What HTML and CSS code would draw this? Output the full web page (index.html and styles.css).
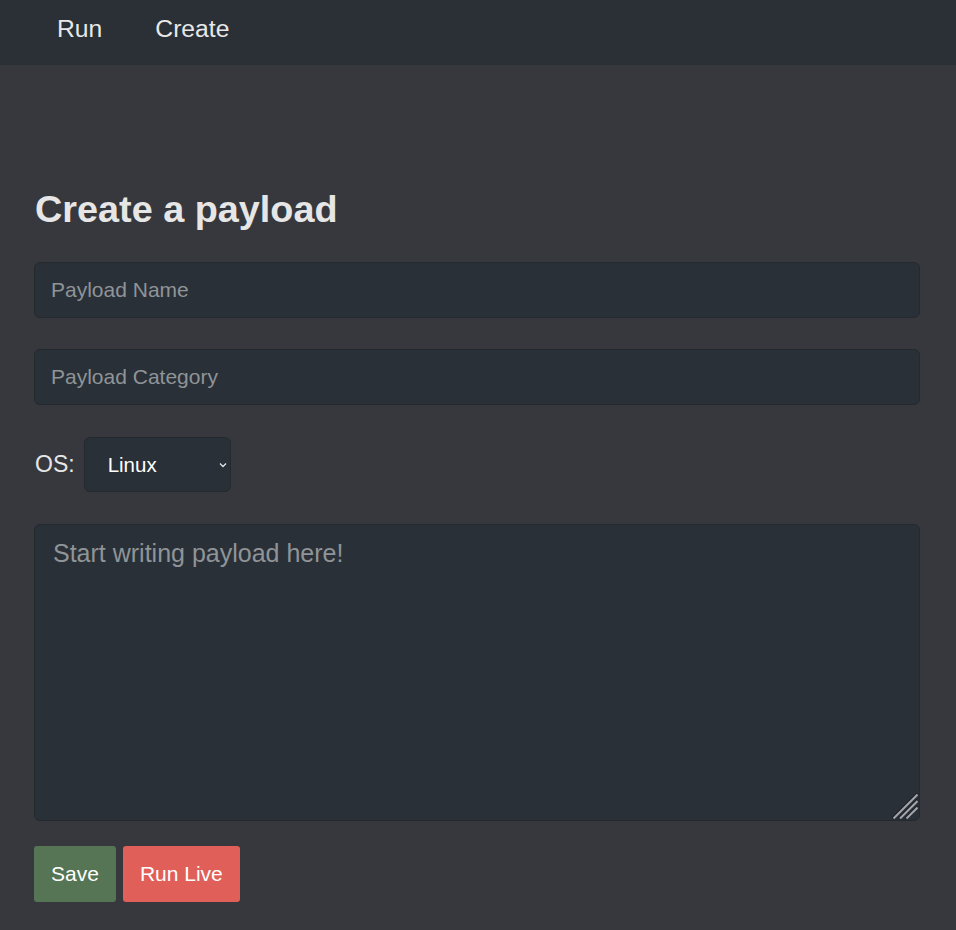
FILE: index.html
```html
<!DOCTYPE html>
<html>
<head>
<meta charset="utf-8">
<link rel="stylesheet" href="styles.css">
</head>
<body>
<nav class="nav">
  <a class="nav-link">Run</a>
  <a class="nav-link">Create</a>
</nav>
<main class="page">
  <h1 class="title">Create a payload</h1>
  <input class="field" type="text" placeholder="Payload Name">
  <input class="field" type="text" placeholder="Payload Category">
  <div class="os-row">
    <label class="os-label">OS:</label>
    <div class="select">
      <span class="select-value">Linux</span>
      <svg class="chev" width="8" height="6" viewBox="0 0 8 6"><path d="M1 1.5 L4 4.5 L7 1.5" fill="none" stroke="#e6e6e6" stroke-width="1.3"/></svg>
    </div>
  </div>
  <div class="editor-wrap">
    <textarea class="editor" placeholder="Start writing payload here!"></textarea>
    <svg class="grip" width="26" height="26" viewBox="0 0 26 26">
      <g stroke-width="2">
        <path d="M0 25.5 L25.5 0" stroke="#1d2126"/>
        <path d="M1.5 25.5 L25.5 1.5" stroke="#a3a7ab"/>
        <path d="M6.5 25.5 L25.5 6.5" stroke="#1d2126"/>
        <path d="M8 25.5 L25.5 8" stroke="#a3a7ab"/>
        <path d="M13 25.5 L25.5 13" stroke="#1d2126"/>
        <path d="M14.5 25.5 L25.5 14.5" stroke="#a3a7ab"/>
      </g>
    </svg>
  </div>
  <div class="actions">
    <button class="btn btn-save">Save</button>
    <button class="btn btn-run">Run Live</button>
  </div>
</main>
</body>
</html>
```
FILE: styles.css
```css
html, body {
  margin: 0;
  padding: 0;
  background: #36383d;
  font-family: "Liberation Sans", Arial, sans-serif;
  color: #e6e6e6;
}
.nav {
  height: 65px;
  background: #2a3036;
  display: flex;
  align-items: center;
  padding-left: 57px;
  gap: 53px;
  box-sizing: border-box;
}
.nav-link {
  font-size: 24.7px;
  color: #e8e8e8;
  line-height: 1;
  margin-top: -7px;
}
.page {
  padding: 0 36px 0 34px;
  display: flex;
  flex-direction: column;
}
.title {
  margin: 122px 0 0 1px;
  font-size: 37.8px;
  font-weight: bold;
  line-height: 44px;
  color: #e6e6e6;
}
.field {
  margin-top: 31px;
  height: 56px;
  box-sizing: border-box;
  background: #2a3037;
  border: 1px solid #24292e;
  border-radius: 6px;
  padding: 0 16px;
  font-family: "Liberation Sans", Arial, sans-serif;
  font-size: 21px;
  color: #e6e6e6;
  outline: none;
}
.field::placeholder, .editor::placeholder {
  color: #8f9497;
}
.os-row {
  margin-top: 32px;
  display: flex;
  align-items: center;
  gap: 9px;
}
.os-label {
  font-size: 23px;
  color: #e6e6e6;
  margin-left: 1px;
}
.select {
  width: 147px;
  height: 55px;
  box-sizing: border-box;
  background: #2a3037;
  border: 1px solid #24292e;
  border-radius: 6px;
  display: flex;
  align-items: center;
  justify-content: space-between;
  padding: 0 3px 0 23px;
}
.select-value {
  font-size: 20.5px;
  color: #ffffff;
}
.editor-wrap {
  margin-top: 32px;
  position: relative;
  display: flex;
}
.editor {
  flex: 1;
  height: 297px;
  box-sizing: border-box;
  background: #2a3037;
  border: 1px solid #24292e;
  border-radius: 6px;
  padding: 14px 18px;
  font-family: "Liberation Sans", Arial, sans-serif;
  font-size: 25px;
  color: #e6e6e6;
  outline: none;
  resize: none;
}
.grip {
  position: absolute;
  right: 2px;
  bottom: 2px;
}
.actions {
  margin-top: 25px;
  display: flex;
  gap: 7px;
}
.btn {
  height: 56px;
  border: none;
  border-radius: 3px;
  padding: 0 17px;
  font-family: "Liberation Sans", Arial, sans-serif;
  font-size: 21px;
  color: #ffffff;
  cursor: pointer;
}
.btn-save {
  background: #557555;
}
.btn-run {
  background: #e05f58;
}
```
